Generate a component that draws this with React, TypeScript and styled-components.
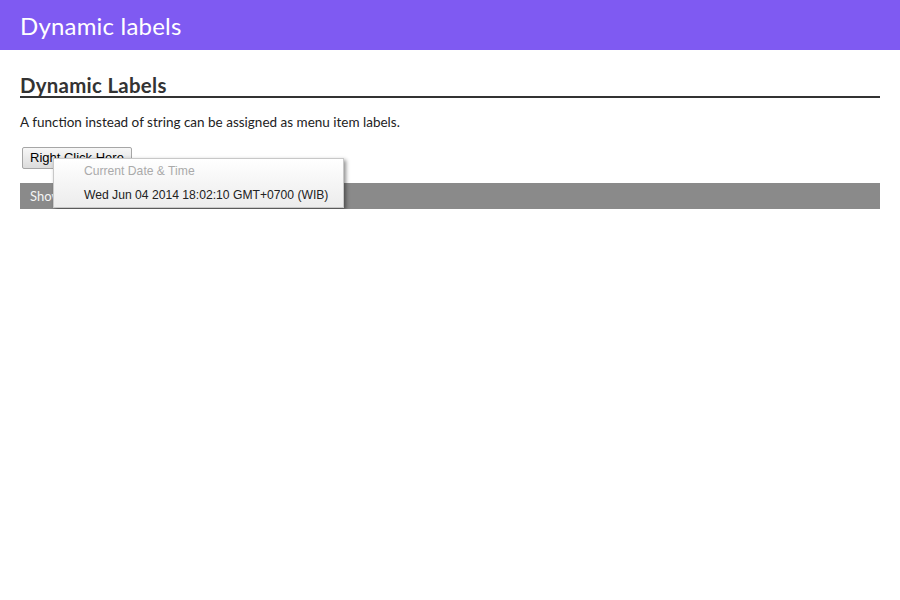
import React from "react";
import styled, { createGlobalStyle } from "styled-components";

const Global = createGlobalStyle`
  html, body { margin: 0; padding: 0; background: #fff; }
  body { font-family: "Lato", "DejaVu Sans", sans-serif; color: #333; }
`;

const Header = styled.header`
  height: 50px;
  background: #7f5af2;
  display: flex;
  align-items: center;
  padding: 0 20px;
`;

const HeaderTitle = styled.h1`
  margin: 0;
  font-family: "Lato", sans-serif;
  font-weight: 400;
  font-size: 24px;
  color: #fff;
  letter-spacing: 0.2px;
`;

const Main = styled.main`
  padding: 24px 20px 0;
`;

const SectionTitle = styled.h2`
  margin: 0;
  font-size: 20.4px;
  font-weight: 700;
  color: #333;
  line-height: 22px;
  border-bottom: 2px solid #333;
  letter-spacing: 0.3px;
`;

const Lead = styled.p`
  margin: 16px 0 0;
  font-size: 13.5px;
  line-height: 16px;
  color: #222;
`;

const Demo = styled.div`
  position: relative;
  margin-top: 16px;
`;

const TriggerButton = styled.button`
  margin-left: 2px;
  height: 22px;
  padding: 0 7px;
  font-family: "Liberation Sans", Arial, sans-serif;
  font-size: 13px;
  color: #000;
  background: linear-gradient(#f7f7f7, #dcdcdc);
  border: 1px solid #a6a6a6;
  border-radius: 2px;
`;

const CodeBar = styled.div`
  margin-top: 14px;
  height: 26px;
  background: #8a8a8a;
  color: #f4f4f4;
  font-size: 13px;
  display: flex;
  align-items: center;
  padding: 0 10px;
`;

const Menu = styled.ul`
  position: absolute;
  left: 33px;
  top: 12px;
  width: 289px;
  margin: 0;
  padding: 0;
  list-style: none;
  background: linear-gradient(#ffffff, #ececec);
  border: 1px solid #c8c8c8;
  box-shadow: 2px 2px 4px rgba(0, 0, 0, 0.45);
  font-family: "Liberation Sans", Arial, sans-serif;
  font-size: 12.15px;
`;

const MenuItem = styled.li<{ $disabled?: boolean }>`
  height: 24px;
  line-height: 24px;
  padding-left: 30px;
  color: ${(p) => (p.$disabled ? "#aaa" : "#222")};
  white-space: nowrap;
`;

export default function App() {
  return (
    <>
      <Global />
      <Header>
        <HeaderTitle>Dynamic labels</HeaderTitle>
      </Header>
      <Main>
        <SectionTitle>Dynamic Labels</SectionTitle>
        <Lead>A function instead of string can be assigned as menu item labels.</Lead>
        <Demo>
          <TriggerButton>Right Click Here</TriggerButton>
          <CodeBar>Show Code</CodeBar>
          <Menu>
            <MenuItem $disabled>Current Date &amp; Time</MenuItem>
            <MenuItem>Wed Jun 04 2014 18:02:10 GMT+0700 (WIB)</MenuItem>
          </Menu>
        </Demo>
      </Main>
    </>
  );
}
